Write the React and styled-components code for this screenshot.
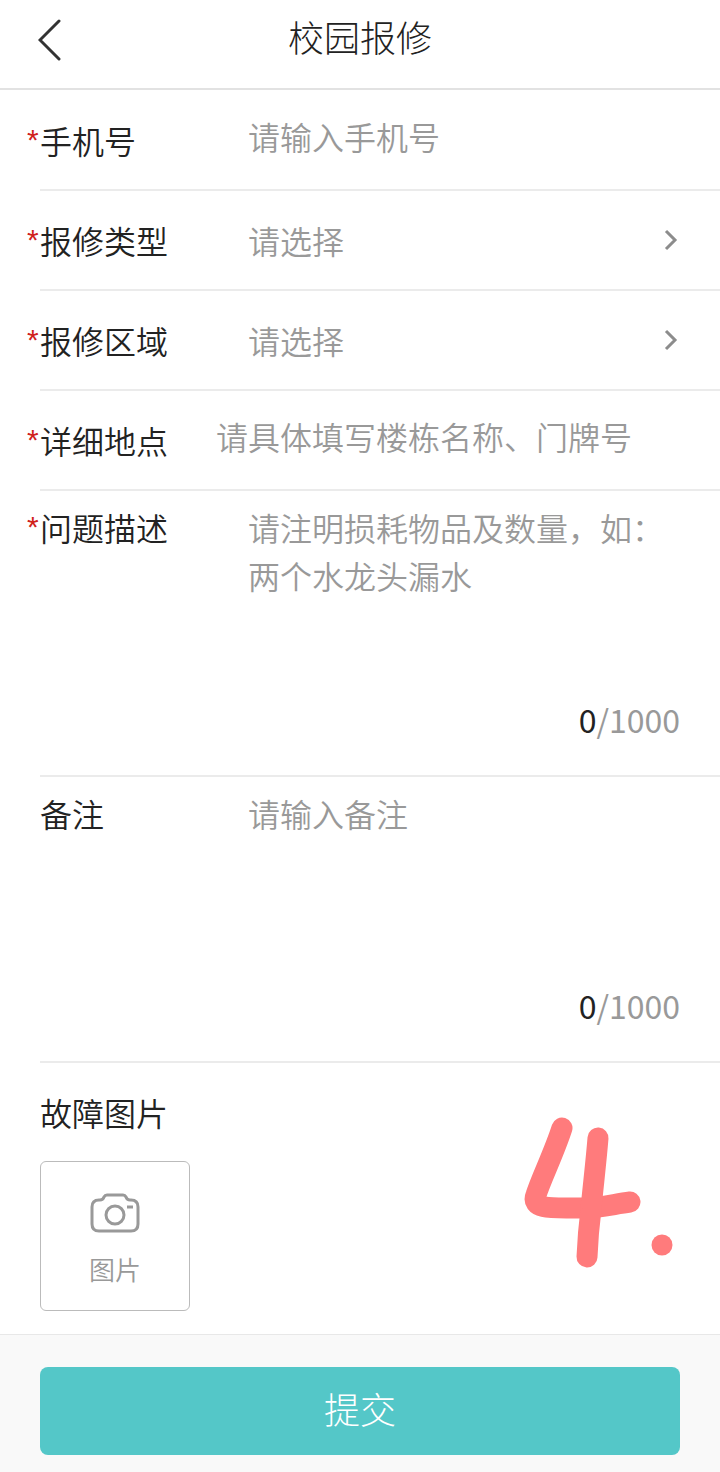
import React, { useState } from "react";
import styled, { createGlobalStyle } from "styled-components";

const initialValues = {
   phone: '',
   type: '',
   area: '',
   place: '',
   problem: '',
   remark: '',
};

const maxLength = 1000;

export default function App(){
   const [values, setValues] = useState(initialValues);

   function onChange(evt) {
      const { name, value } = evt.target;
      setValues({ ...values, [name]: value });
   }

   function onSubmit(evt) {
      evt.preventDefault();
   }

   return (
      <>
         <GlobalStyle />
         <DivPageStyled>
            <HeaderStyled>
               <ButtonBackStyled type='button' aria-label='返回'>
                  <svg width='24' height='42' viewBox='0 0 24 42' fill='none' stroke='#333' strokeWidth='3' strokeLinecap='round'>
                     <path d='M21 2 L2 21 L21 40' />
                  </svg>
               </ButtonBackStyled>
               <H1TitleStyled>校园报修</H1TitleStyled>
            </HeaderStyled>

            <FormStyled id='repair' onSubmit={onSubmit}>
               <DivRowStyled>
                  <Label htmlFor='phone' required>手机号</Label>
                  <InputStyled
                     id='phone'
                     type='tel'
                     name='phone'
                     placeholder='请输入手机号'
                     value={values.phone}
                     onChange={onChange}
                  />
               </DivRowStyled>

               <SelectRow
                  name='type'
                  label='报修类型'
                  options={['水电', '门窗', '家具']}
                  value={values.type}
                  onChange={onChange}
               />
               <SelectRow
                  name='area'
                  label='报修区域'
                  options={['宿舍', '教学楼', '食堂']}
                  value={values.area}
                  onChange={onChange}
               />

               <DivRowStyled>
                  <Label htmlFor='place' required narrow>详细地点</Label>
                  <InputStyled
                     id='place'
                     type='text'
                     name='place'
                     placeholder='请具体填写楼栋名称、门牌号'
                     value={values.place}
                     onChange={onChange}
                  />
               </DivRowStyled>

               <TextRow
                  name='problem'
                  label='问题描述'
                  placeholder='请注明损耗物品及数量，如：两个水龙头漏水'
                  value={values.problem}
                  onChange={onChange}
                  required
               />
               <TextRow
                  name='remark'
                  label='备注'
                  placeholder='请输入备注'
                  value={values.remark}
                  onChange={onChange}
               />

               <SectionPhotoStyled>
                  <H2PhotoStyled>故障图片</H2PhotoStyled>
                  <ButtonPhotoStyled type='button'>
                     <CameraIcon />
                     图片
                  </ButtonPhotoStyled>
                  <StepMark />
               </SectionPhotoStyled>
            </FormStyled>

            <FooterStyled>
               <ButtonSubmitStyled type='submit' form='repair'>提交</ButtonSubmitStyled>
            </FooterStyled>
         </DivPageStyled>
      </>
   );
}

function Label({ htmlFor, required, narrow, children }){
   return (
      <LabelStyled htmlFor={htmlFor} $narrow={narrow}>
         {required && <SpanStarStyled>*</SpanStarStyled>}
         {children}
      </LabelStyled>
   );
}

function SelectRow({ name, label, options, value, onChange }){
   return (
      <DivRowStyled>
         <Label htmlFor={name} required>{label}</Label>
         <SelectStyled id={name} name={name} value={value} onChange={onChange} $empty={value === ''}>
            <option value=''>请选择</option>
            {options.map(option => (
               <option key={option} value={option}>{option}</option>
            ))}
         </SelectStyled>
         <SvgArrowStyled width='16' height='22' viewBox='0 0 16 22'>
            <path d='M2 2 L11 11 L2 20' />
         </SvgArrowStyled>
      </DivRowStyled>
   );
}

function TextRow({ name, label, placeholder, value, onChange, required }){
   return (
      <DivTextRowStyled>
         <Label htmlFor={name} required={required}>{label}</Label>
         <DivTextStyled>
            <TextareaStyled
               id={name}
               name={name}
               maxLength={maxLength}
               placeholder={placeholder}
               value={value}
               onChange={onChange}
            />
            <PCounterStyled>
               <SpanCountStyled>{value.length}</SpanCountStyled>/{maxLength}
            </PCounterStyled>
         </DivTextStyled>
      </DivTextRowStyled>
   );
}

function CameraIcon(){
   return (
      <svg width='50' height='40' viewBox='0 0 50 40' fill='none' stroke='#999' strokeWidth='3' strokeLinejoin='round'>
         <path d='M9 7 H10 Q13 7 14 4 Q15 2 17 2 H33 Q35 2 36 4 Q37 7 40 7 H41 Q48 7 48 14 V31 Q48 38 41 38 H9 Q2 38 2 31 V14 Q2 7 9 7 Z' />
         <circle cx='25' cy='22' r='9' />
         <path d='M37 14 H43' />
      </svg>
   );
}

// hand drawn marker on top of the page
function StepMark(){
   return (
      <SvgMarkStyled width='150' height='152' viewBox='0 0 150 152'>
         <path d='M39 11 C31 36 18 62 13 78 C7 93 32 91 54 91 C76 92 90 87 107 85' />
         <path d='M75 21 C73 46 70 70 68 92 Q65 116 64 140' />
         <path d='M139 128 h0' />
      </SvgMarkStyled>
   );
}

const GlobalStyle = createGlobalStyle`
   * {
      box-sizing: border-box;
   }

   body {
      background: #fff;
      color: #222;
      font-family: "Noto Sans CJK SC", sans-serif;
      font-size: 32px;
      font-weight: 350;
      line-height: 48px;
      margin: 0;
   }

   button, input, select, textarea {
      background: none;
      border: none;
      color: inherit;
      font: inherit;
      margin: 0;
      outline: none;
      padding: 0;
   }

   ::placeholder {
      color: #999;
      opacity: 1;
   }
`

const DivPageStyled = styled.div`
   display: flex;
   flex-direction: column;
   min-height: 100vh;
`

const HeaderStyled = styled.header`
   align-items: center;
   border-bottom: 2px solid #e2e2e2;
   display: grid;
   grid-template-columns: 96px 1fr 96px;
   height: 90px;
   padding-bottom: 8px;
`

const ButtonBackStyled = styled.button`
   display: flex;
   padding-left: 38px;
`

const H1TitleStyled = styled.h1`
   font-size: 36px;
   font-weight: 300;
   margin: 0;
   padding-bottom: 8px;
   text-align: center;
`

const FormStyled = styled.form`
   flex: 1 0 auto;
   padding-left: 40px;
   padding-top: 1px;
`

const DivRowStyled = styled.div`
   align-items: center;
   border-bottom: 2px solid #ebebeb;
   display: flex;
   height: 100px;
   padding-right: 40px;
`

const DivTextRowStyled = styled(DivRowStyled)`
   align-items: flex-start;
   height: auto;
   padding-bottom: 32px;
   padding-top: 12px;
`

const LabelStyled = styled.label`
   display: flex;
   flex: 0 0 ${props => props.$narrow ? '176px' : '208px'};
`

const SpanStarStyled = styled.span`
   color: #d0211c;
   font-family: "Liberation Sans", sans-serif;
   font-size: 30px;
   margin-left: -13px;
   width: 13px;
`

const InputStyled = styled.input`
   flex: 1;
   height: 48px;
   margin-bottom: 8px;
   min-width: 0;
`

const SelectStyled = styled.select`
   appearance: none;
   color: ${props => props.$empty ? '#999' : 'inherit'};
   flex: 1;
   height: 48px;
   min-width: 0;
`

const SvgArrowStyled = styled.svg`
   fill: none;
   pointer-events: none;
   stroke: #8c8c8c;
   stroke-width: 3;
`

const DivTextStyled = styled.div`
   flex: 1;
   min-width: 0;
`

const TextareaStyled = styled.textarea`
   display: block;
   height: 192px;
   overflow: hidden;
   resize: none;
   width: 100%;
`

const PCounterStyled = styled.p`
   color: #999;
   font-weight: 400;
   margin: 0;
   text-align: right;
`

const SpanCountStyled = styled.span`
   color: #222;
`

const SectionPhotoStyled = styled.section`
   padding: 25px 0 22px;
   position: relative;
`

const H2PhotoStyled = styled.h2`
   font-size: 32px;
   font-weight: 350;
   margin: 0 0 25px;
`

const ButtonPhotoStyled = styled.button`
   align-items: center;
   border: 1px solid #bbb;
   border-radius: 6px;
   color: #999;
   display: flex;
   flex-direction: column;
   font-size: 26px;
   gap: 12px;
   height: 150px;
   justify-content: center;
   line-height: 48px;
   padding-top: 14px;
   width: 150px;
`

const SvgMarkStyled = styled.svg`
   fill: none;
   pointer-events: none;
   position: absolute;
   right: 47px;
   stroke: #ff7b7c;
   stroke-linecap: round;
   stroke-linejoin: round;
   stroke-width: 21;
   top: 54px;
`

const FooterStyled = styled.footer`
   background: #f9f9f9;
   border-top: 1px solid #e8e8e8;
   padding: 32px 40px 17px;
`

const ButtonSubmitStyled = styled.button`
   background: #54c7c8;
   border-radius: 8px;
   color: #fff;
   display: block;
   font-size: 36px;
   font-weight: 300;
   height: 88px;
   padding-bottom: 6px;
   width: 100%;
`
